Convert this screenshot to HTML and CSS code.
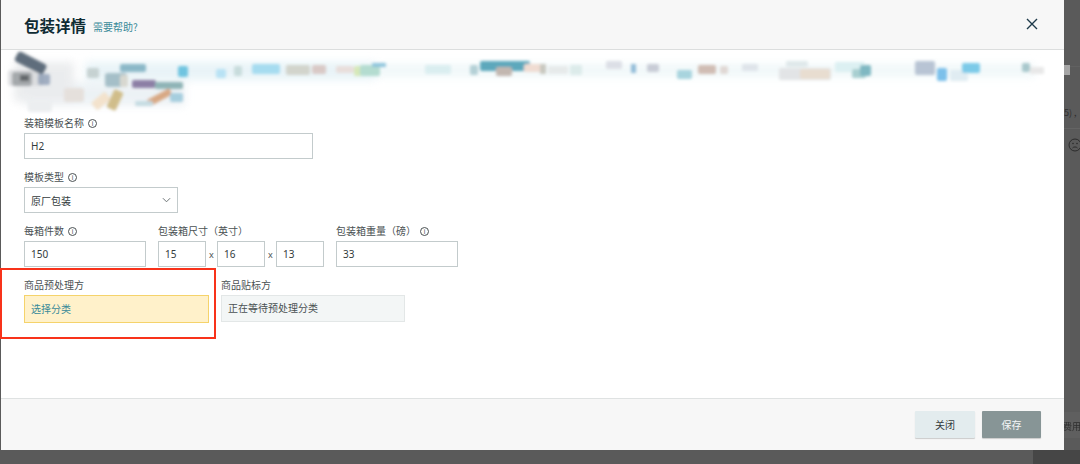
FILE: index.html
```html
<!DOCTYPE html>
<html lang="zh">
<head>
<meta charset="utf-8">
<title>包装详情</title>
<link rel="stylesheet" href="styles.css">
</head>
<body>
<div class="backdrop">
  <div class="bg-band bg-band-a"></div>
  <div class="bg-band bg-band-b"></div>
  <div class="bg-band bg-band-c"></div>
  <div class="bg-thumb"></div>
  <span class="bg-text bg-count">5) ,</span>
  <svg class="bg-smile" viewBox="0 0 14 14" width="14" height="14"><circle cx="7" cy="7" r="6" fill="none" stroke="#2b2b2b" stroke-width="1"/><circle cx="5" cy="5.5" r=".8" fill="#2b2b2b"/><circle cx="9" cy="5.5" r=".8" fill="#2b2b2b"/><path d="M4.5 10c1.2-1.4 3.8-1.4 5 0" fill="none" stroke="#2b2b2b"/></svg>
  <span class="bg-text bg-fee">费用</span>
</div>
<main class="modal">
  <header class="modal-head">
    <h1 class="title">包装详情</h1>
    <a class="help">需要帮助?</a>
    <svg class="close" viewBox="0 0 12 12" width="12" height="12"><path d="M1 1l10 10M11 1L1 11" stroke="#1e3a4a" stroke-width="1.4" fill="none"/></svg>
  </header>
  <section class="modal-body">
    <svg class="smear" viewBox="0 0 1063 65" width="1063" height="65" aria-hidden="true">
      <defs>
        <filter id="b" x="-5%" y="-20%" width="110%" height="140%"><feGaussianBlur stdDeviation="1.6"/></filter>
        <filter id="h" x="-5%" y="-50%" width="110%" height="200%"><feGaussianBlur stdDeviation="4"/></filter>
      </defs>
      <g filter="url(#h)" transform="translate(-1 -50)" opacity=".8">
        <rect x="85" y="62" width="290" height="18" fill="#e3f1f6"/>
        <rect x="375" y="64" width="660" height="13" fill="#edf6f8"/>
        <rect x="25" y="82" width="160" height="24" fill="#e8eff3"/>
        <rect x="14" y="62" width="60" height="40" fill="#e6e8ea"/>
      </g>
      <g filter="url(#b)" transform="translate(-1 -50)">
        <rect x="8" y="70" width="36" height="16" rx="3" fill="#d8dadc" opacity=".8"/>
        <rect x="28" y="100" width="24" height="12" rx="3" fill="#eceef0"/>
        <rect x="15" y="57" width="32" height="11" rx="3" fill="#5f6d7b" transform="rotate(27 30 62)"/>
        <rect x="12" y="72" width="20" height="14" rx="3" fill="#a4a8ab"/>
        <rect x="20" y="75" width="9" height="6" fill="#63676a"/>
        <rect x="38" y="74" width="12" height="11" rx="2" fill="#8d9db5" opacity=".8"/>
        <rect x="64" y="88" width="20" height="14" rx="3" fill="#e5e0dc"/>
        <rect x="87" y="68" width="12" height="10" rx="2" fill="#c6d2d2"/>
        <rect x="105" y="73" width="22" height="14" rx="3" fill="#a5bfc8"/>
        <rect x="120" y="64" width="26" height="8" rx="2" fill="#8bb8c8"/>
        <rect x="178" y="66" width="10" height="11" rx="2" fill="#6fc4e0"/>
        <rect x="120" y="75" width="8" height="12" rx="2" fill="#d8d8d0"/>
        <rect x="132" y="80" width="24" height="8" rx="2" fill="#8c7fa5"/>
        <rect x="155" y="82" width="28" height="7" rx="2" fill="#8fb4b6"/>
        <rect x="92" y="96" width="18" height="10" rx="2" fill="#f3e2cc" transform="rotate(-40 101 101)"/>
        <rect x="105" y="95" width="20" height="10" rx="2" fill="#d0bd8a" transform="rotate(-65 115 100)"/>
        <rect x="146" y="94" width="26" height="7" rx="2" fill="#d8a884" transform="rotate(-28 159 97)"/>
        <rect x="170" y="93" width="13" height="9" rx="2" fill="#a6cede"/>
        <rect x="135" y="101" width="18" height="5" rx="2" fill="#c5dbe2"/>
        <rect x="216" y="69" width="10" height="9" rx="2" fill="#b8e2f4"/>
        <rect x="234" y="66" width="8" height="10" rx="2" fill="#c8dcdc"/>
        <rect x="252" y="64" width="28" height="10" rx="2" fill="#a6dcf0"/>
        <rect x="286" y="65" width="24" height="10" rx="2" fill="#d2d4cc"/>
        <rect x="312" y="65" width="14" height="9" rx="2" fill="#d9c9c6"/>
        <rect x="336" y="66" width="18" height="7" rx="2" fill="#e8dedb"/>
        <rect x="354" y="66" width="8" height="10" rx="2" fill="#d6e8b8"/>
        <rect x="360" y="65" width="20" height="11" rx="2" fill="#b4dcd0"/>
        <rect x="372" y="63" width="14" height="4" rx="1" fill="#8ec4dc"/>
        <rect x="425" y="65" width="26" height="9" rx="2" fill="#daeef0"/>
        <rect x="470" y="65" width="8" height="10" rx="2" fill="#b4d0d6"/>
        <rect x="480" y="61" width="50" height="10" rx="2" fill="#5da8bc"/>
        <rect x="496" y="67" width="16" height="9" rx="2" fill="#c2b7b0"/>
        <rect x="524" y="64" width="22" height="8" rx="2" fill="#f0dcd2"/>
        <rect x="540" y="64" width="6" height="10" rx="1" fill="#c8c8c0"/>
        <rect x="548" y="66" width="20" height="8" rx="2" fill="#e6eaea"/>
        <rect x="570" y="65" width="12" height="10" rx="2" fill="#dcebea"/>
        <rect x="606" y="61" width="16" height="8" rx="2" fill="#dcdfe6"/>
        <rect x="631" y="64" width="5" height="9" rx="1" fill="#92bcd8"/>
        <rect x="647" y="64" width="12" height="8" rx="2" fill="#c8ccd6"/>
        <rect x="677" y="70" width="15" height="9" rx="2" fill="#a8d4de"/>
        <rect x="698" y="65" width="18" height="9" rx="2" fill="#d0bdb4"/>
        <rect x="720" y="66" width="8" height="8" rx="2" fill="#e0d8d4"/>
        <rect x="742" y="64" width="16" height="7" rx="2" fill="#dfe4ea"/>
        <rect x="779" y="68" width="52" height="12" rx="2" fill="#e2e4e6"/>
        <rect x="800" y="69" width="30" height="10" rx="2" fill="#e8ddd0"/>
        <rect x="786" y="61" width="22" height="6" rx="2" fill="#dfe8ea"/>
        <rect x="835" y="62" width="30" height="10" rx="2" fill="#dcf0f2"/>
        <rect x="852" y="69" width="14" height="9" rx="2" fill="#a8cfd0"/>
        <rect x="860" y="65" width="11" height="11" rx="2" fill="#7fb8c2"/>
        <rect x="915" y="61" width="20" height="14" rx="2" fill="#b8c4d4"/>
        <rect x="937" y="68" width="10" height="13" rx="2" fill="#7cc0ea"/>
        <rect x="950" y="70" width="18" height="11" rx="2" fill="#e0ecf2"/>
        <rect x="962" y="63" width="18" height="10" rx="2" fill="#7ccae8"/>
        <rect x="1022" y="63" width="8" height="9" rx="2" fill="#a8c8cc"/>
        <rect x="1030" y="67" width="14" height="7" rx="1" fill="#e8e8e8"/>
      </g>
    </svg>

    <div class="form">
      <div class="field">
        <label class="label">装箱模板名称 <i class="info">i</i></label>
        <div class="input w-name">H2</div>
      </div>
      <div class="field">
        <label class="label">模板类型 <i class="info">i</i></label>
        <div class="input w-type select">原厂包装
          <svg viewBox="0 0 10 6" width="9" height="6"><path d="M1 1l4 4 4-4" fill="none" stroke="#6b7274" stroke-width="1.1"/></svg>
        </div>
      </div>
      <div class="row">
        <div class="field">
          <label class="label">每箱件数 <i class="info">i</i></label>
          <div class="input w-qty">150</div>
        </div>
        <div class="field">
          <label class="label">包装箱尺寸（英寸）</label>
          <div class="dims">
            <div class="input w-dim">15</div><span class="x">x</span>
            <div class="input w-dim">16</div><span class="x">x</span>
            <div class="input w-dim">13</div>
          </div>
        </div>
        <div class="field">
          <label class="label">包装箱重量（磅） <i class="info">i</i></label>
          <div class="input w-qty">33</div>
        </div>
      </div>
      <div class="row row-owner">
        <div class="field">
          <label class="label">商品预处理方</label>
          <div class="box box-warn">选择分类</div>
        </div>
        <div class="field">
          <label class="label">商品贴标方</label>
          <div class="box box-muted">正在等待预处理分类</div>
        </div>
      </div>
    </div>
  </section>
  <footer class="modal-foot">
    <button class="btn btn-close">关闭</button>
    <button class="btn btn-save">保存</button>
  </footer>
</main>
<div class="highlight"></div>
</body>
</html>
```

FILE: styles.css
```css
* { box-sizing: border-box; }
html, body { margin: 0; height: 100%; }
body {
  width: 1080px;
  height: 464px;
  overflow: hidden;
  position: relative;
  font-family: "Noto Sans CJK SC", "Noto Sans", sans-serif;
  font-size: 10px;
  color: #333b3d;
  background: #585858;
  padding-left: 1px;
}
.backdrop {
  position: absolute;
  inset: 0;
  background: #5a5a5a;
  filter: blur(.4px);
}
.backdrop::after {
  content: "";
  position: absolute;
  left: 1033px; right: 0; top: 450px; bottom: 0;
  background: #464646;
}
.bg-band { position: absolute; left: 1064px; right: 0; }
.bg-band-a { top: 66px; height: 1px; background: #616161; }
.bg-band-b { top: 128px; height: 1px; background: #646464; }
.bg-band-c { top: 412px; height: 26px; background: #5f5f5f; }
.bg-thumb { position: absolute; left: 1064px; top: 65px; width: 6px; height: 10px; background: #a5a5a5; }
.bg-text { position: absolute; color: #2e2e2e; font-size: 9px; line-height: 12px; white-space: nowrap; }
.bg-count { left: 1064px; top: 107px; }
.bg-fee { left: 1063px; top: 421px; }
.bg-smile { position: absolute; left: 1068px; top: 138px; }

.modal {
  position: relative;
  width: 1063px;
  height: 450px;
  background: #fff;
  display: flex;
  flex-direction: column;
  filter: blur(.3px);
}
.modal-head {
  height: 50px;
  flex: none;
  background: #f7f7f7;
  border-bottom: 1px solid #dcdede;
  display: flex;
  align-items: center;
  padding: 0 26px 0 23px;
}
.title {
  margin: 0;
  font-size: 15.5px;
  line-height: 20px;
  font-weight: 700;
  color: #0f2b33;
}
.help { margin-left: 7px; margin-top: 3px; color: #3a8a99; font-size: 10px; }
.close { margin-left: auto; margin-top: -2px; }

.modal-body { flex: 1; min-height: 0; }
.smear { display: block; }
.form { padding: 0 23px; display: flex; flex-direction: column; gap: 11px; margin-top: 1px; }
.field { display: flex; flex-direction: column; }
.label {
  display: flex;
  align-items: center;
  gap: 4px;
  height: 17px;
  padding-bottom: 3px;
  line-height: 14px;
  color: #4a5153;
  white-space: nowrap;
}
.info {
  width: 9px;
  height: 9px;
  border: 1px solid #4a5153;
  border-radius: 50%;
  font: normal 7px/7px "Liberation Sans", sans-serif;
  text-align: center;
  color: #4a5153;
}
.input {
  height: 26px;
  border: 1px solid #c3cbcc;
  background: #fff;
  padding: 0 6px;
  display: flex;
  align-items: center;
  color: #333b3d;
  font-family: "Noto Sans", "Noto Sans CJK SC", sans-serif;
  font-size: 10px;
}
.w-name { width: 289px; }
.w-type { width: 154px; }
.w-qty { width: 122px; }
.w-dim { width: 48px; }
.select { justify-content: space-between; padding-right: 6px; font-family: "Noto Sans CJK SC", sans-serif; }
.row { display: flex; gap: 12px; }
.dims { display: flex; align-items: center; }
.x { width: 11px; text-align: center; color: #4a5153; font: 9px "Noto Sans", sans-serif; }
.box {
  height: 28px;
  width: 185px;
  padding: 0 6px 2px;
  display: flex;
  align-items: center;
}
.box-warn { background: #fff1ca; border: 1px solid #f5d36b; color: #3a8a99; }
.box-muted { background: #f3f6f6; border: 1px solid #e3e7e7; color: #4a5153; width: 184px; height: 27px; }

.modal-foot {
  flex: none;
  height: 52px;
  background: #f7f7f7;
  border-top: 1px solid #dfe2e2;
  display: flex;
  justify-content: flex-end;
  gap: 7px;
  padding: 12px 23px 0 0;
}
.btn {
  width: 60px;
  height: 27px;
  border: 0;
  border-radius: 1px;
  font-family: "Noto Sans CJK SC", sans-serif;
  font-size: 10px;
  padding: 0;
  box-shadow: 0 1px 1px rgba(0, 0, 0, .18);
}
.btn-close { background: #e3ecee; color: #333b3d; }
.btn-save { width: 59px; background: #879596; color: #f4f6f6; }

.highlight {
  position: absolute;
  left: 0;
  top: 268px;
  width: 216px;
  height: 71px;
  border: 2.5px solid #f8321a;
}
```
